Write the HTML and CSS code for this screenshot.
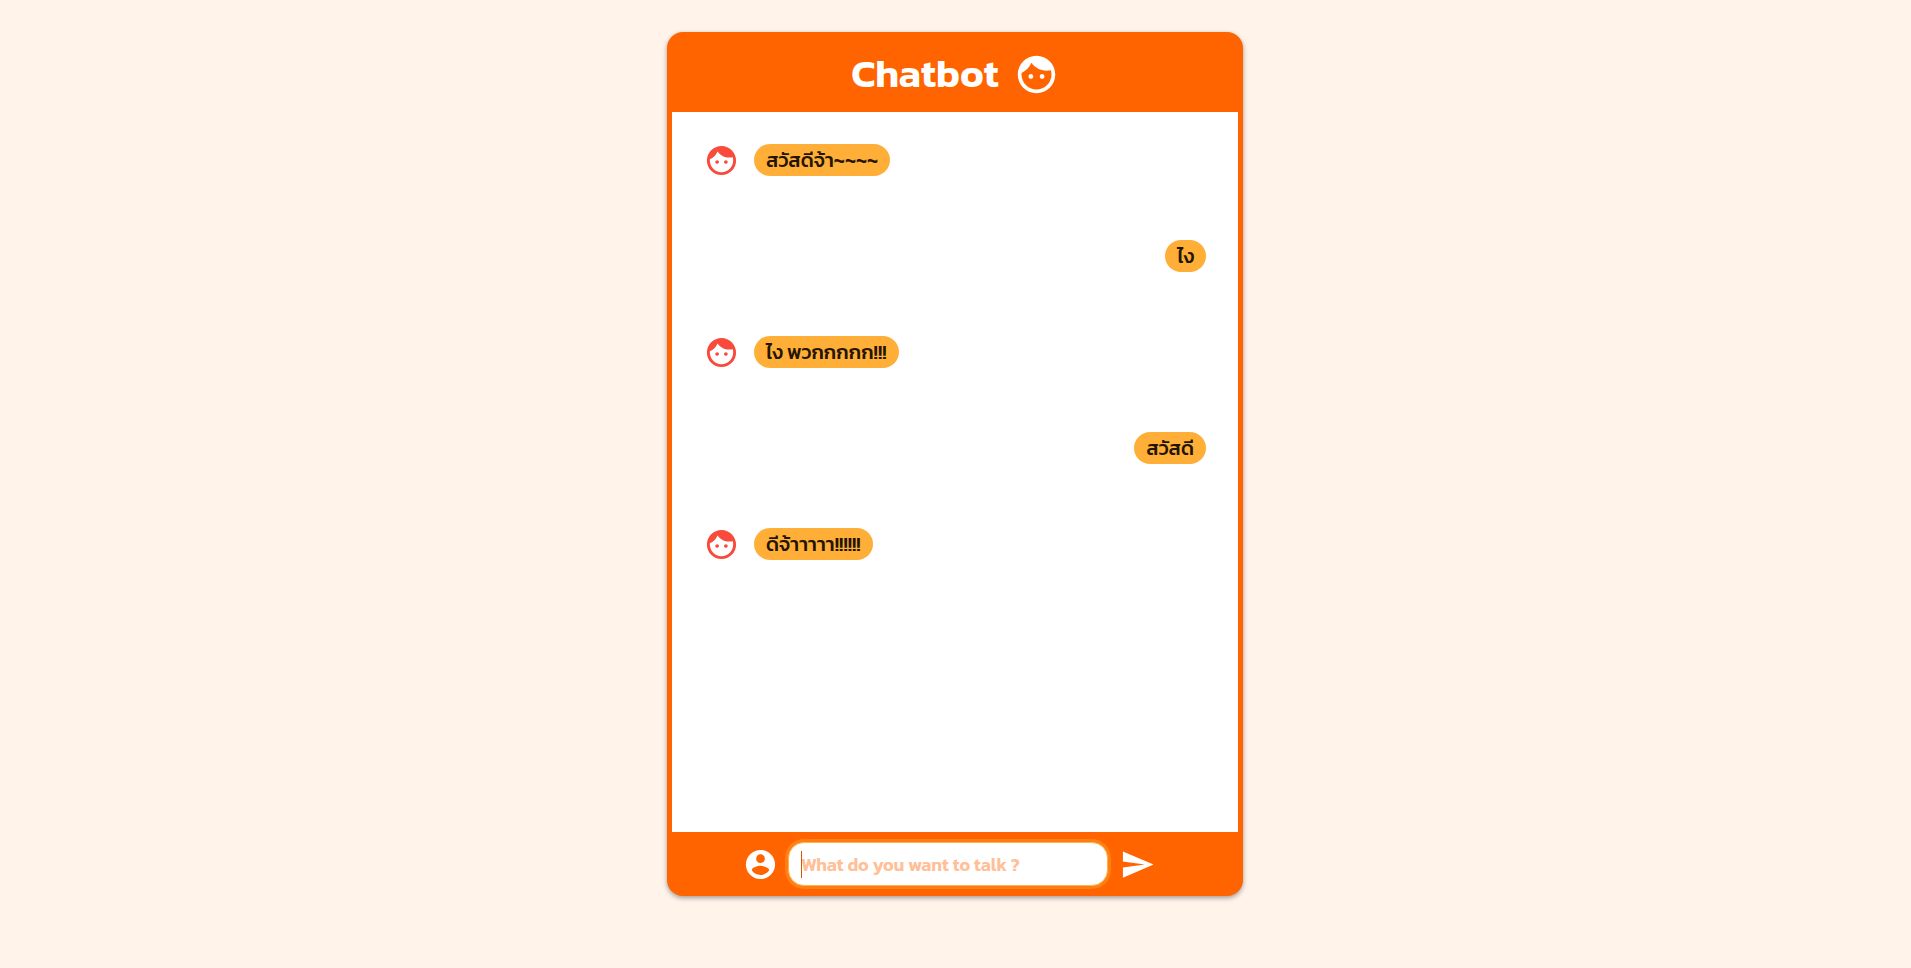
FILE: index.html
```html
<!DOCTYPE html>
<html lang="th">
<head>
<meta charset="utf-8">
<meta name="viewport" content="width=device-width, initial-scale=1">
<title>Chatbot</title>
<link rel="stylesheet" href="styles.css">
</head>
<body>
<svg class="sprite" aria-hidden="true">
  <symbol id="face" viewBox="0 0 24 24"><path d="M9 11.750c-.69 0-1.250.56-1.250 1.250s.56 1.250 1.250 1.250 1.250-.56 1.250-1.250-.56-1.250-1.250-1.250zm6 0c-.69 0-1.250.56-1.250 1.250s.56 1.250 1.250 1.250 1.250-.56 1.250-1.250-.56-1.250-1.250-1.250zM12 2C6.480 2 2 6.480 2 12s4.480 10 10 10 10-4.480 10-10S17.520 2 12 2zm0 18c-4.410 0-8-3.590-8-8 0-.29.02-.58.05-.86 2.360-1.050 4.230-2.980 5.210-5.370C11.070 8.330 14.050 10 17.420 10c.78 0 1.530-.09 2.250-.26.21.71.33 1.470.33 2.260 0 4.410-3.590 8-8 8z"/></symbol>
</svg>
<main class="chat">
  <header class="chat-header">
    <h1 class="chat-title">Chatbot</h1>
    <svg class="icon-large" aria-hidden="true"><use href="#face"/></svg>
  </header>
  <section class="messages" aria-label="Messages">
    <div class="message bot"><svg class="icon" aria-hidden="true"><use href="#face"/></svg><p class="bubble">สวัสดีจ้า~~~~</p></div>
    <div class="message user"><p class="bubble">ไง</p></div>
    <div class="message bot"><svg class="icon" aria-hidden="true"><use href="#face"/></svg><p class="bubble">ไง พวกกกกก!!!</p></div>
    <div class="message user"><p class="bubble">สวัสดี</p></div>
    <div class="message bot"><svg class="icon" aria-hidden="true"><use href="#face"/></svg><p class="bubble">ดีจ้าาาาา!!!!!!</p></div>
  </section>
  <form class="composer">
    <svg class="icon" viewBox="0 0 24 24" aria-hidden="true"><path d="M12 2C6.480 2 2 6.480 2 12s4.480 10 10 10 10-4.480 10-10S17.520 2 12 2zm0 3c1.660 0 3 1.340 3 3s-1.340 3-3 3-3-1.340-3-3 1.340-3 3-3zm0 14.200c-2.500 0-4.710-1.280-6-3.220.03-1.990 4-3.080 6-3.080 1.990 0 5.970 1.090 6 3.080-1.290 1.940-3.500 3.220-6 3.220z"/></svg>
    <div class="field">
      <input class="field-input" type="text" placeholder="What do you want to talk ?" aria-label="Message">
      <span class="caret"></span>
    </div>
    <button class="send" type="button" aria-label="Send"><svg class="icon" viewBox="0 0 24 24" aria-hidden="true"><path d="M2.010 21L23 12 2.010 3 2 10l15 2-15 2z"/></svg></button>
  </form>
</main>
</body>
</html>
```
FILE: styles.css
```css
* {
  box-sizing: border-box;
}

body {
  margin: 0;
  min-height: 100vh;
  padding: 32px 17px 32px 16px;
  background: #fff3ea;
  font-family: Kanit, Roboto, "Noto Sans Thai", "Noto Sans", sans-serif;
}

.sprite {
  display: none;
}

.chat {
  max-width: 576px;
  margin: 0 auto;
  overflow: hidden;
  border-radius: 16px;
  background: #ff6400;
  box-shadow: 0 2px 5px rgba(0, 0, 0, 0.36);
}

.chat-header {
  display: flex;
  align-items: center;
  justify-content: center;
  gap: 15px;
  min-height: 80px;
  padding-top: 4px;
  color: #fff;
}

.chat-title {
  margin: 0;
  padding-bottom: 2px;
  font-size: 40px;
  font-weight: 600;
  line-height: 48px;
}

.icon,
.icon-large {
  flex: none;
  display: block;
  fill: currentColor;
}

.icon {
  width: 35px;
  height: 35px;
}

.icon-large {
  width: 45px;
  height: 45px;
}

.messages {
  display: flex;
  flex-direction: column;
  gap: 64px;
  min-height: 720px;
  margin: 0 5px;
  padding: 32px;
  background: #fff;
}

.message {
  display: flex;
  align-items: center;
  gap: 15px;
  height: 32px;
}

.user {
  justify-content: flex-end;
}

.bot {
  color: #f94b3c;
}

.bubble {
  margin: 0;
  padding: 0 12px;
  border-radius: 16px;
  background: #ffaf38;
  color: #251400;
  font-size: 20px;
  font-weight: 500;
  line-height: 32px;
}

.composer {
  display: flex;
  align-items: center;
  justify-content: center;
  gap: 10px;
  min-height: 64px;
  padding-right: 12px;
  color: #fff;
}

.field {
  position: relative;
  flex: 0 1 320px;
}

.field-input {
  display: block;
  width: 100%;
  height: 44px;
  padding: 0 12px;
  border: 1px solid #ffb347;
  border-radius: 16px;
  outline: none;
  background: #fff;
  box-shadow: 0 0 0 3px #ff7f17;
  color: #ff6400;
  font: 600 18px/28px Kanit, Roboto, "Noto Sans", sans-serif;
}

.field-input::placeholder {
  color: #ffbf98;
  opacity: 1;
}

.caret {
  position: absolute;
  top: 9px;
  left: 13px;
  width: 1px;
  height: 27px;
  background: #d9550a;
}

.send {
  margin-left: 2px;
  padding: 0;
  border: 0;
  background: none;
  color: inherit;
  cursor: pointer;
}
```
